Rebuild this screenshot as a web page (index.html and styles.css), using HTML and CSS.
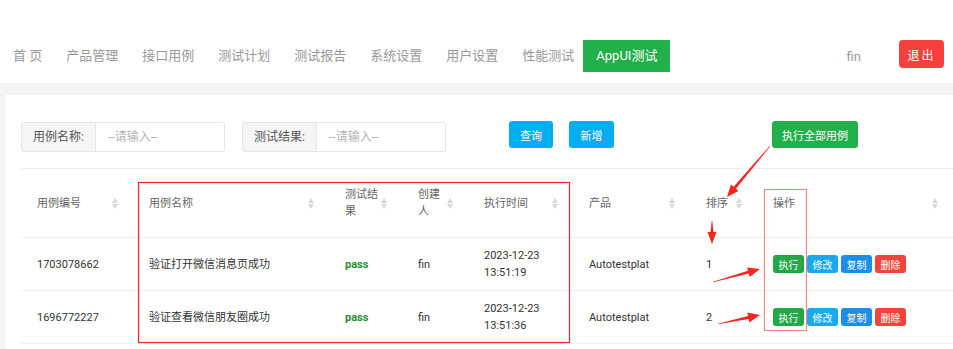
FILE: index.html
```html
<!DOCTYPE html>
<html>
<head>
    <meta charset="utf-8">
    <title>AppUI测试</title>
    <link rel="stylesheet" href="styles.css">
</head>
<body>
    <div class="nav">
        <a class="nav-item">首 页</a>
        <a class="nav-item">产品管理</a>
        <a class="nav-item">接口用例</a>
        <a class="nav-item">测试计划</a>
        <a class="nav-item">测试报告</a>
        <a class="nav-item">系统设置</a>
        <a class="nav-item">用户设置</a>
        <a class="nav-item">性能测试</a>
        <a class="nav-item active">AppUI测试</a>
        <span class="user">fin</span>
        <button class="logout">退出</button>
    </div>

    <div class="main">
        <div class="card">
            <div class="search">
                <div class="field">
                    <span class="field-label">用例名称:</span>
                    <input class="field-input" placeholder="--请输入--">
                </div>
                <div class="field">
                    <span class="field-label">测试结果:</span>
                    <input class="field-input" placeholder="--请输入--">
                </div>
                <button class="btn btn-blue btn-query">查询</button>
                <button class="btn btn-blue btn-add">新增</button>
                <button class="btn btn-green btn-runall">执行全部用例</button>
            </div>

            <table class="grid">
                <colgroup>
                    <col style="width:112px"><col style="width:196px"><col style="width:73px"><col style="width:66px">
                    <col style="width:105px"><col style="width:117px"><col style="width:67px"><col style="width:196px">
                </colgroup>
                <thead>
                    <tr>
                        <th><div class="th"><span>用例编号</span><i class="sort"></i></div></th>
                        <th><div class="th"><span>用例名称</span><i class="sort"></i></div></th>
                        <th><div class="th"><span>测试结<br>果</span><i class="sort"></i></div></th>
                        <th><div class="th"><span>创建<br>人</span><i class="sort"></i></div></th>
                        <th><div class="th"><span>执行时间</span><i class="sort"></i></div></th>
                        <th><div class="th"><span>产品</span><i class="sort"></i></div></th>
                        <th><div class="th"><span>排序</span><i class="sort"></i></div></th>
                        <th><div class="th"><span>操作</span><i class="sort"></i></div></th>
                    </tr>
                </thead>
                <tbody>
                    <tr>
                        <td>1703078662</td>
                        <td>验证打开微信消息页成功</td>
                        <td class="pass">pass</td>
                        <td>fin</td>
                        <td>2023-12-23<br>13:51:19</td>
                        <td>Autotestplat</td>
                        <td>1</td>
                        <td class="ops">
                            <button class="op op-run">执行</button><button class="op op-edit">修改</button><button class="op op-copy">复制</button><button class="op op-del">删除</button>
                        </td>
                    </tr>
                    <tr>
                        <td>1696772227</td>
                        <td>验证查看微信朋友圈成功</td>
                        <td class="pass">pass</td>
                        <td>fin</td>
                        <td>2023-12-23<br>13:51:36</td>
                        <td>Autotestplat</td>
                        <td>2</td>
                        <td class="ops">
                            <button class="op op-run">执行</button><button class="op op-edit">修改</button><button class="op op-copy">复制</button><button class="op op-del">删除</button>
                        </td>
                    </tr>
                </tbody>
            </table>
        </div>
    </div>

    <!-- screenshot annotations -->
    <svg class="marks" width="953" height="349" viewBox="0 0 953 349">
        <rect x="138.5" y="182.5" width="431" height="160" fill="none" stroke="#f5261f" stroke-width="1.2"/>
        <rect x="764.5" y="189.5" width="42" height="141" fill="none" stroke="#f28b87" stroke-width="1.2"/>
        <g fill="#f5261f">
            <polygon points="770.2,146.2 735.9,188.8 738.5,191 727,197 730.9,184.6 733.6,186.8 769.8,145.8"/>
            <polygon points="712.3,221 713.5,232 716.5,232 712,244 707.5,232 710.5,232 711.7,221"/>
            <polygon points="713.1,282.3 748.8,273.6 749.7,277 760,269 747.1,267.4 748,270.8 712.9,281.7"/>
            <polygon points="718.1,324.3 748.6,319 749.3,322.4 760,315 747.3,312.6 748,316 717.9,323.7"/>
        </g>
    </svg>
</body>
</html>
```

FILE: styles.css
```css
/* General */
body, html {
    margin: 0;
    padding: 0;
    background-color: #f3f4f5;
    font-family: Roboto, "Noto Sans CJK SC", sans-serif;
    color: #333333;
    overflow: hidden;
}
body {
    position: relative;
    height: 349px;
}
button, input {
    font-family: inherit;
}
/* Top navigation */
.nav {
    display: flex;
    align-items: center;
    background-color: #ffffff;
    padding: 40px 9px 11px 1px;
    height: 32px;
}
.nav-item {
    padding: 0 12px;
    font-size: 13px;
    line-height: 32px;
    color: #999999;
    white-space: nowrap;
}
.nav-item.active {
    background-color: #22b04b;
    color: #ffffff;
    padding: 0 13px;
    margin-left: -3px;
}
.user {
    margin-left: auto;
    margin-right: 38px;
    font-size: 13px;
    color: #999999;
}
.logout {
    width: 45px;
    height: 28px;
    border: none;
    border-radius: 4px;
    background-color: #f5403d;
    color: #ffffff;
    font-size: 12px;
    letter-spacing: 2px;
    margin-top: -4px;
}
/* Main card */
.main {
    padding: 12px 0 0 5px;
}
.card {
    background-color: #ffffff;
    width: 948px;
    padding: 27px 0 0 16px;
    box-sizing: border-box;
    height: 260px;
}
/* Search bar */
.search {
    display: flex;
    align-items: flex-start;
    height: 30px;
    margin-bottom: 16px;
}
.field {
    display: flex;
    margin-right: 17px;
}
.field-label {
    width: 75px;
    height: 30px;
    box-sizing: border-box;
    line-height: 28px;
    text-align: center;
    font-size: 12px;
    color: #555555;
    background-color: #f5f5f5;
    border: 1px solid #e6e6e6;
    border-radius: 3px 0 0 3px;
}
.field-input {
    width: 129px;
    height: 30px;
    box-sizing: border-box;
    border: 1px solid #e6e6e6;
    border-left: none;
    border-radius: 0 3px 3px 0;
    padding: 0 12px;
    font-size: 12px;
    outline: none;
}
.field-input::placeholder {
    color: #b5b5b5;
}
.btn {
    height: 27px;
    border: none;
    border-radius: 3px;
    color: #ffffff;
    font-size: 11px;
    margin-top: -1px;
    padding: 0;
}
.btn-blue {
    background-color: #03aef0;
    width: 44px;
}
.btn-green {
    background-color: #22b04b;
    width: 86px;
}
.btn-query {
    margin-left: 46px;
}
.btn-add {
    margin-left: 16px;
    width: 45px;
}
.btn-runall {
    margin-left: 158px;
}
/* Table */
.grid {
    width: 932px;
    table-layout: fixed;
    border-collapse: collapse;
    border-top: 1px solid #eeeeee;
    font-size: 11px;
    line-height: 17px;
}
.grid th {
    padding: 17px 0;
    font-weight: normal;
    color: #666666;
    text-align: left;
    border-bottom: 1px solid #f0f0f0;
}
.th {
    display: flex;
    align-items: center;
    justify-content: space-between;
    padding: 0 14px 0 16px;
}
.sort {
    position: relative;
    width: 7px;
    height: 11px;
}
.sort::before, .sort::after {
    content: "";
    position: absolute;
    left: 0;
    border-left: 3.5px solid transparent;
    border-right: 3.5px solid transparent;
}
.sort::before {
    top: 0;
    border-bottom: 5px solid #d4d7dc;
}
.sort::after {
    bottom: 0;
    border-top: 5px solid #d4d7dc;
}
.grid td {
    padding: 9px 0 9px 16px;
    border-bottom: 1px solid #f0f0f0;
    color: #333333;
    white-space: nowrap;
}
.grid td.pass {
    color: #1f8f2e;
    font-weight: bold;
}
.ops {
    font-size: 0;
}
.op {
    width: 31px;
    height: 18px;
    border: none;
    border-radius: 3px;
    margin-right: 3px;
    padding: 0;
    font-size: 10px;
    color: #ffffff;
    vertical-align: middle;
}
.op-run { background-color: #22a847; }
.op-edit { background-color: #17aaef; }
.op-copy { background-color: #1a8fe6; }
.op-del { background-color: #f4433c; }
/* Annotations drawn over the screenshot */
.marks {
    position: absolute;
    left: 0;
    top: 0;
    pointer-events: none;
}
```
